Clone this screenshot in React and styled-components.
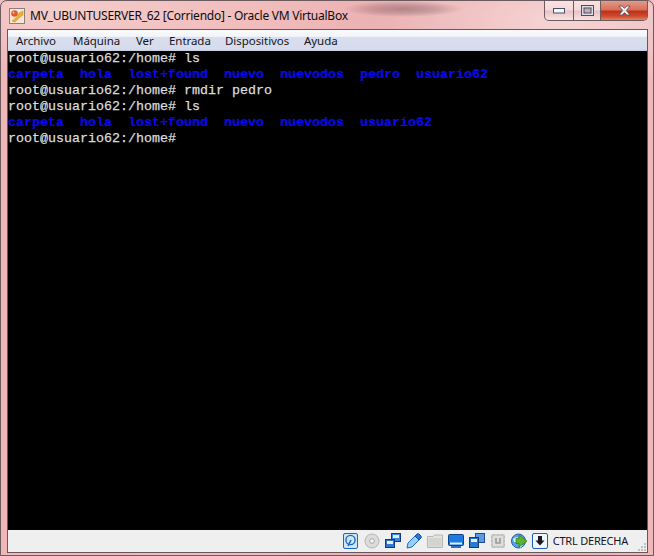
import React from "react";
import styled, { createGlobalStyle } from "styled-components";

const Global = createGlobalStyle`
  html, body { margin: 0; padding: 0; width: 654px; height: 556px; overflow: hidden; background: #efbdbd; }
  #root { width: 654px; height: 556px; }
`;

const Win = styled.div`
  width: 654px;
  height: 556px;
  box-sizing: border-box;
  display: flex;
  flex-direction: column;
  border: 1px solid #6b5a5e;
  border-radius: 7px 7px 0 0;
  background:
    radial-gradient(ellipse 60px 8px at 402px 8px, rgba(140,100,105,.6), rgba(140,100,105,.35) 55%, rgba(140,100,105,0) 100%),
    radial-gradient(ellipse 190px 70px at 560px 20px, rgba(247,218,218,.85), rgba(247,218,218,0) 100%),
    radial-gradient(ellipse 200px 60px at 60px 10px, rgba(245,215,210,.7), rgba(245,215,210,0) 100%),
    linear-gradient(90deg, #f0b6b8 0%, #f1bcbc 40%, #ebb0b2 60%, #efb8b8 100%);
  padding: 0 5px 2px 6px;
`;

const TitleBar = styled.div`
  height: 28px;
  flex: none;
  display: flex;
  align-items: flex-start;
  box-sizing: border-box;
  padding-left: 2px;
`;

const AppIcon = styled.svg`
  width: 16px;
  height: 16px;
  margin-top: 7px;
  flex: none;
`;

const TitleText = styled.div`
  margin: 6px 0 0 5px;
  font: 12px/18px "Noto Sans", sans-serif;
  letter-spacing: -0.25px;
  color: #0c0c10;
  white-space: pre;
  flex: 1;
`;

const Caption = styled.div`
  display: flex;
  height: 19px;
  border: 1px solid #6b5a5e;
  border-top: 0;
  border-radius: 0 0 5px 5px;
  overflow: hidden;
  flex: none;
`;

const CapBtn = styled.div`
  width: ${p => p.$w}px;
  display: flex;
  align-items: center;
  justify-content: center;
  box-sizing: border-box;
  border-left: ${p => (p.$first ? "0" : "1px solid #6b5a5e")};
  background: ${p =>
    p.$close
      ? "linear-gradient(#e29a88 0%, #d9705a 45%, #bd3118 55%, #cf4b2c 80%, #e0806a 100%)"
      : "linear-gradient(rgba(255,255,255,.45) 0%, rgba(255,255,255,.2) 48%, rgba(170,130,135,.18) 52%, rgba(255,255,255,.35) 100%)"};
`;

const Panel = styled.div`
  flex: 1;
  min-height: 0;
  display: flex;
  flex-direction: column;
  border: 1px solid #68565b;
  background: #f0f0f0;
`;

const MenuBar = styled.div`
  height: 21px;
  flex: none;
  display: flex;
  box-sizing: border-box;
  padding-left: 8px;
  background: linear-gradient(#f9fafc 0%, #f3f5fa 30%, #d8deed 36%, #d6dcec 90%, #c6cde0 100%);
`;

const MenuItem = styled.div`
  width: ${p => p.$w}px;
  flex: none;
  font: 11.5px/22px "Noto Sans", sans-serif;
  letter-spacing: -0.05px;
  color: #15151c;
  white-space: pre;
`;

const Terminal = styled.pre`
  flex: 1;
  min-height: 0;
  margin: 0;
  background: #000;
  font: 13.33px/16px "Liberation Mono", monospace;
  overflow: hidden;
`;

const Line = styled.div`
  height: 16px;
  font-weight: ${p => (p.$dir ? 700 : 400)};
  color: ${p => (p.$dir ? "#0808ff" : "#dcdcdc")};
  -webkit-text-stroke: ${p => (p.$dir ? "0" : "0.25px")};
`;

const StatusBar = styled.div`
  height: 22px;
  flex: none;
  display: flex;
  align-items: center;
  justify-content: flex-end;
  gap: 5px;
  background: #efefef;
  position: relative;
  padding-right: 19px;
`;

const StatusLabel = styled.div`
  font: 11px/22px "Noto Sans", sans-serif;
  letter-spacing: -0.2px;
  color: #14141a;
  white-space: pre;
`;

const Grip = styled.svg`
  position: absolute;
  right: 0;
  bottom: 0;
  width: 10px;
  height: 10px;
`;

const Ico = styled.svg`
  width: 16px;
  height: 16px;
  flex: none;
`;

const terminalLines = [
  ["root@usuario62:/home# ls", false],
  ["carpeta  hola  lost+found  nuevo  nuevodos  pedro  usuario62", true],
  ["root@usuario62:/home# rmdir pedro", false],
  ["root@usuario62:/home# ls", false],
  ["carpeta  hola  lost+found  nuevo  nuevodos  usuario62", true],
  ["root@usuario62:/home#", false],
];

const menus = [
  ["Archivo", 57], ["Máquina", 63], ["Ver", 33], ["Entrada", 56], ["Dispositivos", 79], ["Ayuda", 50],
];

export default function App() {
  return (
    <Win>
      <Global />
      <TitleBar>
        <AppIcon viewBox="0 0 16 16">
          <rect x="0.5" y="0.5" width="15" height="15" fill="#f6e7d8" stroke="#8d7f78" />
          <path d="M3 13 L8 9 L10 5 L14 3 L14 7 L10 10 L6 14 Z" fill="#eeb030" stroke="#c58a1f" strokeWidth=".5" />
          <circle cx="5.5" cy="5.5" r="3.3" fill="#e25a30" />
          <circle cx="4.6" cy="4.6" r="1.1" fill="#f7b79c" />
        </AppIcon>
        <TitleText>MV_UBUNTUSERVER_62 [Corriendo] - Oracle VM VirtualBox</TitleText>
        <Caption>
          <CapBtn $w={28} $first>
            <svg width="12" height="6" viewBox="0 0 12 6"><rect x=".5" y=".5" width="11" height="4.5" fill="#f4f6fa" stroke="#4a4f66" /></svg>
          </CapBtn>
          <CapBtn $w={27}>
            <svg width="13" height="11" viewBox="0 0 13 11"><rect x=".5" y=".5" width="12" height="10" fill="#d8dce6" stroke="#4a4f66" /><rect x="3" y="3" width="7" height="5" fill="#cfa9ad" stroke="#4a4f66" /></svg>
          </CapBtn>
          <CapBtn $w={47} $close>
            <svg width="13" height="11" viewBox="0 0 13 11">
              <path d="M1 1 H4.2 L6.5 3.4 L8.8 1 H12 L8.3 5.5 L12 10 H8.8 L6.5 7.6 L4.2 10 H1 L4.7 5.5 Z" fill="#f2f2f4" stroke="#5a4a58" strokeWidth=".8" />
            </svg>
          </CapBtn>
        </Caption>
      </TitleBar>
      <Panel>
        <MenuBar>
          {menus.map(([m, w]) => <MenuItem key={m} $w={w}>{m}</MenuItem>)}
        </MenuBar>
        <Terminal>
          {terminalLines.map(([t, d], i) => <Line key={i} $dir={d}>{t}</Line>)}
        </Terminal>
        <StatusBar>
          <Ico viewBox="0 0 16 16">
            <rect x=".5" y=".5" width="14" height="15" rx="1.5" fill="#cfe6f8" stroke="#1a66c0" />
            <circle cx="7.5" cy="7" r="4.6" fill="none" stroke="#1a66c0" strokeWidth="1.4" />
            <path d="M8 7 L5 13" stroke="#1a66c0" strokeWidth="1.6" />
          </Ico>
          <Ico viewBox="0 0 16 16">
            <circle cx="8" cy="8" r="7" fill="#dcdcdc" stroke="#b4b4b4" />
            <circle cx="8" cy="8" r="2.4" fill="#f2f2f2" stroke="#a8a8a8" />
          </Ico>
          <Ico viewBox="0 0 16 16">
            <rect x="6.5" y=".5" width="9" height="8" fill="#3b86dd" stroke="#123a78" />
            <rect x="8" y="2" width="6" height="3" fill="#dceafa" />
            <rect x=".5" y="6.5" width="9" height="8" fill="#2f78d0" stroke="#123a78" />
            <rect x="2" y="8" width="6" height="3" fill="#e8f1fb" />
          </Ico>
          <Ico viewBox="0 0 16 16">
            <path d="M1 15 L2 10 L9 3 L13 7 L6 14 Z" fill="#9ccdf5" stroke="#1f6cc8" />
            <path d="M9 3 L11 1 Q12 .5 13 1 L15 3 Q15.5 4 15 5 L13 7 Z" fill="#2a78d6" stroke="#134f9e" />
          </Ico>
          <Ico viewBox="0 0 16 16">
            <path d="M.5 14.5 V3.5 H6 L7.5 2 H15.5 V14.5 Z" fill="#e3e3e0" stroke="#b6b6b2" />
            <rect x="1.5" y="5" width="13" height="8.5" fill="#d3d3cf" />
          </Ico>
          <Ico viewBox="0 0 16 16">
            <rect x=".5" y="1.5" width="15" height="11" rx="1" fill="#1d7ae0" stroke="#0d3f86" />
            <rect x="2" y="9.5" width="12" height="2" fill="#dceafa" />
            <rect x="3" y="13" width="10" height="2" fill="#2f6fc0" />
          </Ico>
          <Ico viewBox="0 0 16 16">
            <rect x="6.5" y=".5" width="9" height="9" fill="#5a9be6" stroke="#1a4f98" />
            <rect x=".5" y="4.5" width="9" height="10" fill="#2a78d6" stroke="#123a78" />
            <rect x="2" y="6" width="6" height="3" fill="#e6effa" />
          </Ico>
          <Ico viewBox="0 0 16 16">
            <rect x="2" y="2" width="12" height="12" fill="#dededc" stroke="#b0b0ae" />
            <path d="M1 4H2M1 8H2M1 12H2M14 4H15M14 8H15M14 12H15M4 1V2M8 1V2M12 1V2M4 14V15M8 14V15M12 14V15" stroke="#a8a8a6" />
            <path d="M6 5 V10 H10 V5" fill="none" stroke="#9a9a98" strokeWidth="1.6" />
          </Ico>
          <Ico viewBox="0 0 16 16">
            <circle cx="7.5" cy="8" r="7" fill="#5aa2e6" stroke="#1c5ea8" />
            <path d="M2 6 Q5 3 8 5 L6 9 L3 9 Z M9 11 L12 12 L9 15 Z" fill="#d8ecfb" />
            <path d="M8 2 L16 8 L8 14 V10.5 L5 10.5 V5.5 H8 Z" fill="#5fb52a" stroke="#2f7d14" strokeWidth=".7" />
          </Ico>
          <Ico viewBox="0 0 16 16">
            <rect x=".5" y=".5" width="15" height="15" rx="1.5" fill="#f0f5fb" stroke="#1b5fb4" />
            <path d="M6 3 H10 V7.5 H12.5 L8 12.5 L3.5 7.5 H6 Z" fill="#1a1a1e" />
          </Ico>
          <StatusLabel>CTRL DERECHA</StatusLabel>
          <Grip viewBox="0 0 10 10">
            <path d="M7 1h2v2H7zM4 4h2v2H4zM7 4h2v2H7zM1 7h2v2H1zM4 7h2v2H4zM7 7h2v2H7z" fill="#c0c0bc" />
          </Grip>
        </StatusBar>
      </Panel>
    </Win>
  );
}
